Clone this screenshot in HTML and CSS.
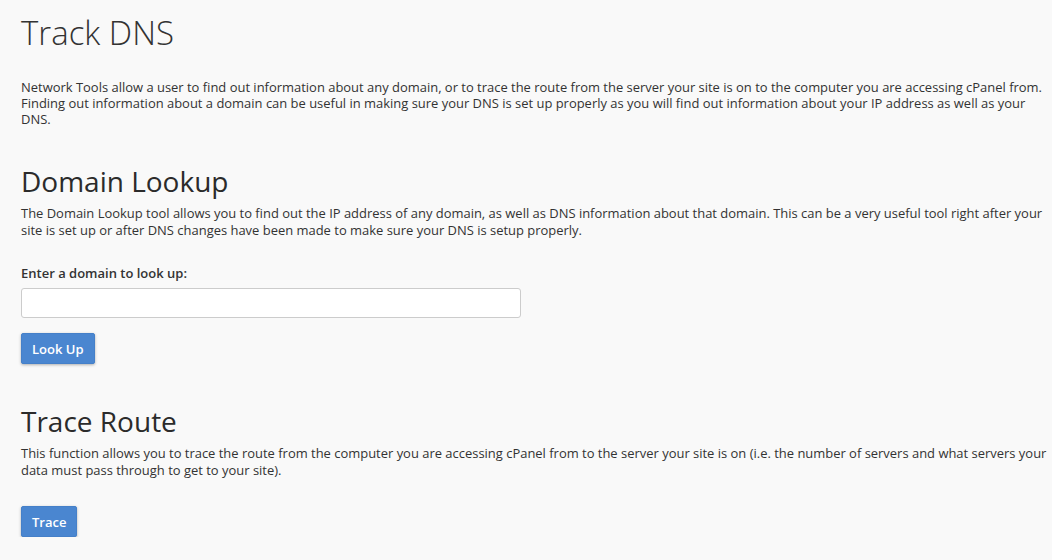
FILE: index.html
```html
<!DOCTYPE html>
<html>
<head>
	<title>Track DNS</title>
	<meta charset="utf-8">
	<link rel="stylesheet" href="styles.css">
</head>
<body>
	<div class="page">
		<h1>Track DNS</h1>
		<p class="intro">Network Tools allow a user to find out information about any domain, or to trace the route from the server your site is on to the computer you are accessing cPanel from. Finding out information about a domain can be useful in making sure your DNS is set up properly as you will find out information about your IP address as well as your DNS.</p>

		<div class="section">
			<h2>Domain Lookup</h2>
			<p>The Domain Lookup tool allows you to find out the IP address of any domain, as well as DNS information about that domain. This can be a very useful tool right after your site is set up or after DNS changes have been made to make sure your DNS is setup properly.</p>
			<form class="lookup-form">
				<label for="domain">Enter a domain to look up:</label>
				<input type="text" id="domain" name="domain">
				<div><input type="button" class="btn" value="Look Up"></div>
			</form>
		</div>

		<div class="section">
			<h2>Trace Route</h2>
			<p>This function allows you to trace the route from the computer you are accessing cPanel from to the server your site is on (i.e. the number of servers and what servers your data must pass through to get to your site).</p>
			<div class="trace-row"><input type="button" class="btn" value="Trace"></div>
		</div>
	</div>
</body>
</html>
```

FILE: styles.css
```css
*{
	padding: 0;
	margin: 0;
	box-sizing: border-box;
}
body{
	background-color: #f9f9f9;
	color: #333;
	font-family: "Open Sans", "Liberation Sans", sans-serif;
	font-size: 12.96px;
	line-height: 16px;
}
.page{
	padding: 13px 0 0 21px;
}
h1{
	font-size: 33px;
	font-weight: 300;
	line-height: 40px;
	color: #333;
}
.intro{
	margin-top: 26px;
}
.section{
	margin-top: 37px;
}
.section + .section{
	margin-top: 40px;
}
h2{
	font-size: 28px;
	font-weight: 500;
	line-height: 34px;
	color: #2b2b2b;
}
.section p{
	margin-top: 7px;
	line-height: 17px;
}
.lookup-form{
	margin-top: 26px;
	display: flex;
	flex-direction: column;
}
.lookup-form label{
	font-weight: 600;
	font-size: 13px;
}
.lookup-form input[type="text"]{
	margin-top: 7px;
	width: 500px;
	height: 30px;
	background: #fff;
	border: 1px solid #ccc;
	border-radius: 3px;
	padding: 4px 8px;
}
.btn{
	margin-top: 15px;
	background-color: #4a86d0;
	color: #fff;
	font-family: "Open Sans", "Liberation Sans", sans-serif;
	font-size: 13px;
	font-weight: 600;
	border: 1px solid #4580c9;
	border-radius: 2px;
	padding: 0 10px;
	height: 31px;
	box-shadow: 0 1px 3px rgba(0,0,0,0.3);
}
.trace-row{
	margin-top: 27px;
}
.trace-row .btn{
	margin-top: 0;
}
```
